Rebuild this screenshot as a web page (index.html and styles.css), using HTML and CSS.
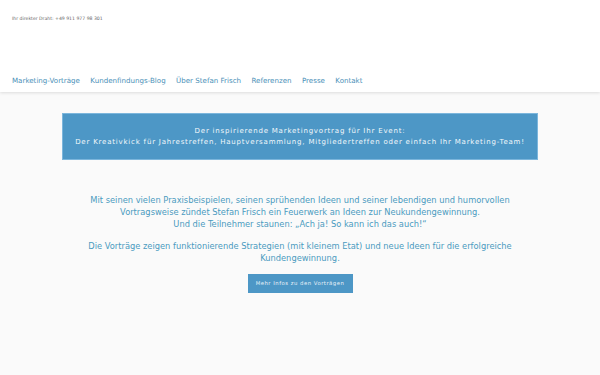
FILE: index.html
```html
<!DOCTYPE html>
<html lang="de">
<head>
<meta charset="utf-8">
<link rel="stylesheet" href="styles.css">
</head>
<body>
<header class="header">
  <div class="topbar">Ihr direkter Draht: <span class="phone">+49 911 977 98 301</span></div>
  <nav class="nav">
    <a href="#">Marketing-Vorträge</a>
    <a href="#">Kundenfindungs-Blog</a>
    <a href="#">Über Stefan Frisch</a>
    <a href="#">Referenzen</a>
    <a href="#">Presse</a>
    <a href="#">Kontakt</a>
  </nav>
</header>
<main class="main">
  <div class="banner">
    <p>Der inspirierende Marketingvortrag für Ihr Event:<br>Der Kreativkick für Jahrestreffen, Hauptversammlung, Mitgliedertreffen oder einfach Ihr Marketing-Team!</p>
  </div>
  <section class="intro">
    <p>Mit seinen vielen Praxisbeispielen, seinen sprühenden Ideen und seiner lebendigen und humorvollen<br>Vortragsweise zündet Stefan Frisch ein Feuerwerk an Ideen zur Neukundengewinnung.<br>Und die Teilnehmer staunen: „Ach ja! So kann ich das auch!“</p>
    <p>Die Vorträge zeigen funktionierende Strategien (mit kleinem Etat) und neue Ideen für die erfolgreiche<br>Kundengewinnung.</p>
    <a class="btn" href="#">Mehr Infos zu den Vorträgen</a>
  </section>
</main>
</body>
</html>
```
FILE: styles.css
```css
html, body {
  margin: 0;
  padding: 0;
}
body {
  background: #fafafa;
  font-family: "DejaVu Sans", sans-serif;
  width: 600px;
  height: 375px;
  overflow: hidden;
}
.header {
  background: #fff;
  box-shadow: 0 1px 3px rgba(0,0,0,0.12);
  padding: 16px 12px 0;
  height: 76px;
}
.topbar {
  font-size: 4.6px;
  color: #666;
  line-height: 6px;
}
.phone {
  color: #666;
}
.nav {
  display: flex;
  gap: 10.4px;
  margin-top: 54px;
}
.nav a {
  font-size: 7.1px;
  color: #4a90b8;
  text-decoration: none;
  line-height: 10px;
}
.main {
  padding: 21px 62px 0;
}
.banner {
  background: #4d97c6;
  border: 1px solid #7cb6dc;
  height: 45px;
  display: flex;
  align-items: center;
  justify-content: center;
}
.banner p {
  margin: 0;
  color: #f2f7fb;
  font-size: 7px;
  letter-spacing: 0.8px;
  line-height: 11px;
  text-align: center;
}
.intro {
  text-align: center;
  padding-top: 34px;
}
.intro p {
  margin: 0 0 10px;
  color: #4a9ac0;
  font-size: 8.3px;
  line-height: 12px;
}
.btn {
  display: block;
  margin: 0 auto;
  width: 105px;
  height: 19px;
  line-height: 19px;
  background: #4d97c6;
  color: #e8f2f9;
  font-size: 5.3px;
  letter-spacing: 0.5px;
  text-decoration: none;
}
```
